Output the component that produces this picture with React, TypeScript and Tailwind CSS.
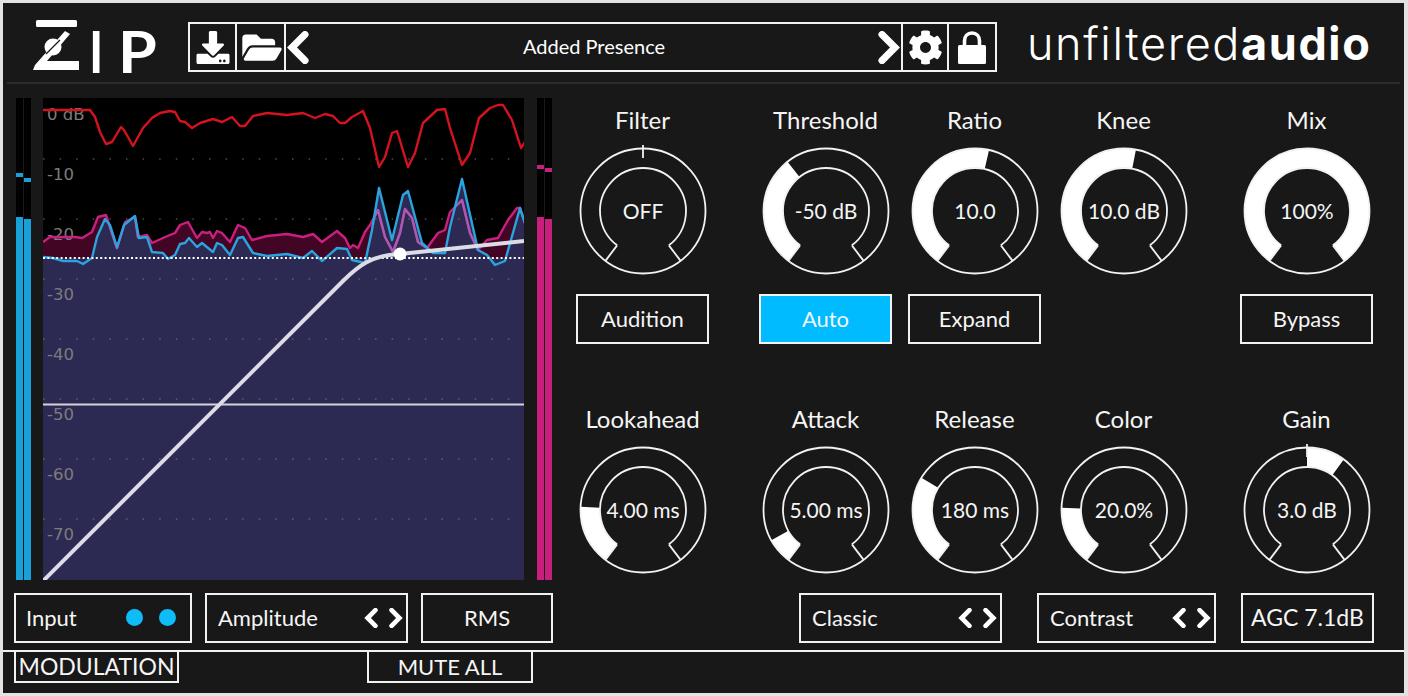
import React from 'react';
import { FaDownload, FaFolderOpen, FaCog } from 'react-icons/fa';

const redLine = '43,110 90,110 95,117 100,132 106,144 112,142 121,127 124,130 133,146 143,128 152,118 160,113 170,111 175,112 180,121 185,122 192,128 200,123 213,119 222,122 232,117 240,126 245,126 253,116 267,113 287,115 303,113 315,118 325,114 333,116 340,123 345,123 352,117 363,111 370,128 379,167 385,157 392,133 397,131 408,167 415,153 423,123 437,110 445,109 450,128 462,165 470,153 479,118 490,108 498,105 503,105 512,120 521,148 525,142';
const pinkLine = '43,242 50,237 75,237 82,238 92,232 98,217 106,215 117,248 125,222 135,217 138,237 147,235 152,243 163,238 170,235 175,233 180,225 188,222 197,238 202,232 207,233 210,232 213,238 217,231 222,233 230,242 238,225 245,228 252,240 267,236 287,234 303,237 313,234 322,242 337,231 345,238 350,248 353,245 358,248 365,232 370,225 378,210 385,237 393,252 400,233 405,209 412,218 418,242 427,248 438,233 445,230 450,212 462,200 470,233 478,250 487,240 498,238 508,220 517,208 520,208 525,223';
const blueLine = '43,257 53,258 63,261 77,261 83,264 92,258 97,237 105,219 110,225 117,247 124,225 135,216 139,238 147,237 152,252 163,253 168,259 175,255 180,244 185,243 189,238 197,247 202,243 213,252 217,243 222,245 230,255 238,238 243,237 253,253 267,256 287,254 303,258 312,251 322,261 337,248 347,249 352,260 365,263 372,230 379,188 392,240 403,195 408,191 422,243 433,253 445,253 450,227 462,179 478,250 487,255 495,265 505,261 520,208 525,223';

const dbLabels = [
  { text: '0 dB', y: 120 },
  { text: '-10', y: 180 },
  { text: '-20', y: 240 },
  { text: '-30', y: 300 },
  { text: '-40', y: 360 },
  { text: '-50', y: 420 },
  { text: '-60', y: 480 },
  { text: '-70', y: 540 },
];
const gridLines = [159, 219, 279, 339, 399, 459, 519];

const Graph = () => (
  <svg viewBox="43 98 481 482" className="w-[481px] h-[482px] bg-black shrink-0">
    <defs>
      <clipPath id="blueArea">
        <polygon points={blueLine + ' 525,580 43,580'} />
      </clipPath>
    </defs>
    <polygon points={pinkLine + ' 525,258 43,258'} fill="#430524" />
    <polygon points={blueLine + ' 525,580 43,580'} fill="#2c2a52" />
    <rect x="43" y="258" width="481" height="322" fill="#2c2a52" />
    {gridLines.map((y) => (
      <line key={y} x1="43" x2="524" y1={y} y2={y} stroke="#8a8a8a" strokeOpacity="0.55" strokeWidth="1.5" strokeDasharray="1.5 15.1" />
    ))}
    {dbLabels.map((l) => (
      <text key={l.y} x="47" y={l.y} fill="#7c7c7c" fontSize="16.5" fontFamily="'DejaVu Sans', sans-serif">{l.text}</text>
    ))}
    <polyline points={redLine} fill="none" stroke="#d5121f" strokeWidth="2.4" strokeLinejoin="round" />
    <polyline points={pinkLine} fill="none" stroke="#c8207f" strokeWidth="2.4" strokeLinejoin="round" />
    <g clipPath="url(#blueArea)">
      <polyline points={pinkLine} fill="none" stroke="#a95bb4" strokeWidth="2.4" strokeLinejoin="round" />
    </g>
    <polyline points={blueLine} fill="none" stroke="#2aa4df" strokeWidth="2.4" strokeLinejoin="round" />
    <line x1="43" x2="524" y1="258" y2="258" stroke="#ffffff" strokeWidth="2" strokeDasharray="2 2.4" />
    <line x1="43" x2="524" y1="404.5" y2="404.5" stroke="#d4d4dc" strokeWidth="2" />
    <path d="M43 581 L343 281 C358 266 372 255 400 254 L524 241" fill="none" stroke="#dcdce6" strokeWidth="4" />
    <circle cx="400" cy="254" r="6.5" fill="#ffffff" />
  </svg>
);

// one vertical level bar: peak tick, then the solid level up to the bottom
const Meter = ({ peak, level, color }: { peak: number; level: number; color: string }) => (
  <div className="w-[7px] h-full bg-black flex flex-col">
    <div style={{ height: peak }} />
    <div className={color + ' h-[4px]'} />
    <div style={{ height: level - peak - 4 }} />
    <div className={color + ' grow'} />
  </div>
);

const polar = (r: number, deg: number) => {
  const a = (deg * Math.PI) / 180;
  return [r * Math.sin(a), -r * Math.cos(a)];
};

const Knob = ({ value, from = -143, to, tick }: { value: string; from?: number; to?: number; tick?: boolean }) => {
  const rOut = 62.5;
  const rIn = 43;
  const [ix1, iy1] = polar(rIn, -143);
  const [ix2, iy2] = polar(rIn, 143);
  const [ox1, oy1] = polar(rOut, -143);
  const [ox2, oy2] = polar(rOut, 143);
  let fill = '';
  if (to !== undefined) {
    const [a, b] = polar(rOut, from);
    const [c, d] = polar(rOut, to);
    const [e, f] = polar(rIn, to);
    const [g, h] = polar(rIn, from);
    const large = to - from > 180 ? 1 : 0;
    fill = 'M' + a + ' ' + b + ' A62.5 62.5 0 ' + large + ' 1 ' + c + ' ' + d + ' L' + e + ' ' + f + ' A43 43 0 ' + large + ' 0 ' + g + ' ' + h + ' Z';
  }
  return (
    <svg viewBox="-65 -65 130 130" className="w-[130px] h-[130px] overflow-visible">
      {fill && <path d={fill} fill="#ffffff" />}
      <circle r={rOut} fill="none" stroke="#f2f2f2" strokeWidth="1.8" />
      <path d={'M' + ix1 + ' ' + iy1 + ' A43 43 0 1 1 ' + ix2 + ' ' + iy2} fill="none" stroke="#f2f2f2" strokeWidth="1.8" />
      <line x1={ix1} y1={iy1} x2={ox1} y2={oy1} stroke="#f2f2f2" strokeWidth="1.8" />
      <line x1={ix2} y1={iy2} x2={ox2} y2={oy2} stroke="#f2f2f2" strokeWidth="1.8" />
      {tick && <line x1="0" x2="0" y1="-53" y2="-66" stroke="#f2f2f2" strokeWidth="1.8" />}
      <text x="0" y="7.5" textAnchor="middle" fill="#f5f5f5" fontSize="21">{value}</text>
    </svg>
  );
};

const Button = ({ label, active }: { label: string; active?: boolean }) => (
  <div className={'w-[133px] h-[50px] pb-[2px] border-2 border-[#f2f2f2] flex items-center justify-center text-[22px] text-[#f5f5f5] ' + (active ? 'bg-[#00bbff]' : '')}>
    {label}
  </div>
);

const KnobColumn = ({ label, children, button, className = '' }: { label: string; children: React.ReactNode; button?: React.ReactNode; className?: string }) => (
  <div className={'w-[133px] flex flex-col items-center ' + className}>
    <div className="h-[30px] flex items-center text-[24px] text-[#f5f5f5] whitespace-nowrap">{label}</div>
    <div className="mt-[11px]">{children}</div>
    {button && <div className="mt-[18px]">{button}</div>}
  </div>
);

const Chevron = ({ dir, size = 'small' }: { dir: 'left' | 'right'; size?: 'small' | 'big' }) => {
  const points = dir === 'left' ? '16,3 5,14 16,25' : '5,3 16,14 5,25';
  return size === 'big' ? (
    <svg viewBox="0 0 21 28" className="w-[25px] h-[33px]">
      <polyline points={points} fill="none" stroke="#ffffff" strokeWidth="6" strokeLinecap="round" strokeLinejoin="miter" />
    </svg>
  ) : (
    <svg viewBox="0 0 21 28" className="w-[15px] h-[20px]">
      <polyline points={points} fill="none" stroke="#ffffff" strokeWidth="6.5" strokeLinecap="round" strokeLinejoin="miter" />
    </svg>
  );
};

const LockIcon = () => (
  <svg viewBox="0 0 28 33" className="w-[28px] h-[33px]">
    <path d="M6.5 15 V10 C6.5 5 9.5 2 14 2 C18.5 2 21.5 5 21.5 10 V15" fill="none" stroke="#ffffff" strokeWidth="3.6" />
    <rect x="0" y="14" width="28" height="19" rx="1.5" fill="#ffffff" />
  </svg>
);

const Select = ({ label, width }: { label: string; width: string }) => (
  <div className={width + ' h-[50px] border-2 border-[#f2f2f2] flex items-center justify-between pl-[11px] pr-[3px] pb-[1px] text-[22px] text-[#f5f5f5]'}>
    <span>{label}</span>
    <span className="flex items-center gap-[9px]">
      <Chevron dir="left" />
      <Chevron dir="right" />
    </span>
  </div>
);

const ZipLogo = () => (
  <div className="ml-[25px] -mt-[3px] flex items-start w-[155px] text-white text-[57px] leading-[62px] font-bold">
    <svg viewBox="0 0 48 52" className="w-[48px] h-[52px] shrink-0">
      <rect x="4" y="1" width="41" height="7" rx="1.5" fill="#ffffff" />
      <path d="M1 51 L3 46 L33 12 L38 15 L15 42 L47 42 L47 51 Z" fill="#ffffff" />
      <circle cx="21" cy="28" r="8.5" fill="#ffffff" />
      <line x1="14" y1="35" x2="28" y2="21" stroke="#181818" strokeWidth="1.2" />
    </svg>
    <span className="ml-[9px] mt-[1px] inline-block origin-left scale-x-[0.85]">I</span>
    <span className="ml-[12px] mt-[1px] inline-block origin-left scale-x-[1.1]">P</span>
  </div>
);

const PresetBar = () => (
  <div className="ml-[1px] w-[809px] h-[50px] border-2 border-[#f2f2f2] flex items-stretch text-white">
    <div className="w-[47px] flex items-center justify-center border-r-2 border-[#f2f2f2]">
      <FaDownload className="w-[34px] h-[33px]" />
    </div>
    <div className="w-[49px] pl-[3px] flex items-center justify-center border-r-2 border-[#f2f2f2]">
      <FaFolderOpen className="w-[40px] h-[35px]" />
    </div>
    <div className="w-[615px] flex items-center justify-between text-[20px]">
      <Chevron dir="left" size="big" />
      <span className="ml-[1px] pb-[2px]">Added Presence</span>
      <Chevron dir="right" size="big" />
    </div>
    <div className="w-[48px] flex items-center justify-center border-x-2 border-[#f2f2f2]">
      <FaCog className="w-[35px] h-[35px]" />
    </div>
    <div className="grow flex items-center justify-center">
      <LockIcon />
    </div>
  </div>
);

export default function App() {
  return (
    <div className="w-[1408px] h-[696px] bg-[#e2e2e2] pt-[3px] pl-[3px] pr-[4px] pb-[3px] font-['Lato',sans-serif]">
      <div className="w-full h-full bg-[#181818] flex flex-col">
        <div className="h-[81px] mx-[4px] -mb-[1px] shrink-0 border-b-2 border-[#2c2c2c] flex items-start pt-[19px]">
          <ZipLogo />
          <PresetBar />
          <div className="ml-[30px] -mt-[8px] text-[45px] leading-[60px] text-white whitespace-nowrap tracking-[1.6px] font-['Inter',sans-serif]">
            <span className="font-light">unfiltered</span>
            <span className="font-bold">audio</span>
          </div>
        </div>

        <div className="h-[567px] shrink-0 flex items-start">
          <div className="ml-[11px] w-[539px] pt-[15px] flex flex-col">
            <div className="h-[482px] flex items-stretch">
              <div className="ml-[2px] flex gap-[1px]">
                <Meter peak={75} level={119} color="bg-[#18a0d8]" />
                <Meter peak={80} level={121} color="bg-[#18a0d8]" />
              </div>
              <div className="ml-[12px]">
                <Graph />
              </div>
              <div className="ml-[13px] flex gap-[1px]">
                <Meter peak={67} level={119} color="bg-[#c81e7d]" />
                <Meter peak={70} level={121} color="bg-[#c81e7d]" />
              </div>
            </div>
            <div className="mt-[13px] flex">
              <div className="w-[178px] h-[50px] pb-[1px] border-2 border-[#f2f2f2] flex items-center pl-[10px] text-[22px] text-[#f5f5f5]">
                <span>Input</span>
                <span className="ml-[49px] w-[17px] h-[17px] rounded-full bg-[#0ebcf8]" />
                <span className="ml-[16px] w-[17px] h-[17px] rounded-full bg-[#0ebcf8]" />
              </div>
              <div className="ml-[13px]">
                <Select label="Amplitude" width="w-[203px]" />
              </div>
              <div className="ml-[13px] w-[132px] h-[50px] pb-[1px] border-2 border-[#f2f2f2] flex items-center justify-center text-[22px] text-[#f5f5f5]">RMS</div>
            </div>
          </div>

          <div className="ml-[23px] pt-[22px] flex flex-col">
            <div className="flex items-start">
              <KnobColumn label="Filter" button={<Button label="Audition" />}>
                <Knob value="OFF" tick />
              </KnobColumn>
              <KnobColumn label="Threshold" className="ml-[50px]" button={<Button label="Auto" active />}>
                <Knob value="-50 dB" to={-38} />
              </KnobColumn>
              <KnobColumn label="Ratio" className="ml-[16px]" button={<Button label="Expand" />}>
                <Knob value="10.0" to={13} />
              </KnobColumn>
              <KnobColumn label="Knee" className="ml-[16px]">
                <Knob value="10.0 dB" to={11} />
              </KnobColumn>
              <KnobColumn label="Mix" className="ml-[50px]" button={<Button label="Bypass" />}>
                <Knob value="100%" to={143} />
              </KnobColumn>
            </div>
            <div className="mt-[60px] flex items-start">
              <KnobColumn label="Lookahead">
                <Knob value="4.00 ms" to={-87} />
              </KnobColumn>
              <KnobColumn label="Attack" className="ml-[50px]">
                <Knob value="5.00 ms" to={-119} />
              </KnobColumn>
              <KnobColumn label="Release" className="ml-[16px]">
                <Knob value="180 ms" to={-59} />
              </KnobColumn>
              <KnobColumn label="Color" className="ml-[16px]">
                <Knob value="20.0%" to={-88} />
              </KnobColumn>
              <KnobColumn label="Gain" className="ml-[50px]">
                <Knob value="3.0 dB" from={0} to={36} tick />
              </KnobColumn>
            </div>
            <div className="mt-[18px] ml-[223px] flex">
              <Select label="Classic" width="w-[203px]" />
              <div className="ml-[35px]">
                <Select label="Contrast" width="w-[179px]" />
              </div>
              <div className="ml-[25px] w-[133px] h-[50px] pb-[1px] border-2 border-[#f2f2f2] flex items-center justify-center text-[23px] text-[#f5f5f5]">AGC 7.1dB</div>
            </div>
          </div>
        </div>

        <div className="grow border-t-2 border-[#f2f2f2] flex items-start text-[#f5f5f5]">
          <div className="ml-[11px] w-[165px] h-[31px] border-2 border-t-0 border-[#f2f2f2] flex items-center justify-center text-[23px]">MODULATION</div>
          <div className="ml-[188px] w-[166px] h-[31px] border-2 border-t-0 border-[#f2f2f2] flex items-center justify-center text-[22px]">MUTE ALL</div>
        </div>
      </div>
    </div>
  );
}
